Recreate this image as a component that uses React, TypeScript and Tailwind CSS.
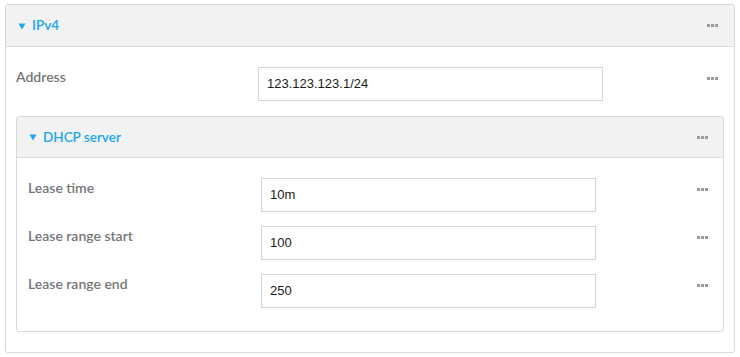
import React from 'react';

const Dots: React.FC = () => (
  <div className="flex gap-[1px]">
    <span className="w-[3px] h-[3px] bg-[#9a9a9a]" />
    <span className="w-[3px] h-[3px] bg-[#9a9a9a]" />
    <span className="w-[3px] h-[3px] bg-[#9a9a9a]" />
  </div>
);

interface FieldRowProps {
  label: string;
  value: string;
  labelWidth: string;
  inputWidth: string;
}

const FieldRow: React.FC<FieldRowProps> = ({ label, value, labelWidth, inputWidth }) => (
  <div className="flex items-start">
    <div className={`${labelWidth} pt-[1px] text-[14px] leading-[18px] font-semibold text-[#757575]`}>{label}</div>
    <div
      className={`${inputWidth} h-[34px] border border-[#d4d4d4] bg-white pl-[8px] flex items-center text-[13px] text-[#1a1a1a]`}
      style={{ fontFamily: '"Liberation Sans", Arial, sans-serif' }}
    >
      {value}
    </div>
    <div className="ml-auto pt-[10px]">
      <Dots />
    </div>
  </div>
);

// small filled caret, 7px wide like the reference
const Caret: React.FC = () => (
  <svg width="8" height="7" viewBox="0 0 8 7" className="mr-[6px] mt-[1px]">
    <path d="M0.5 0.5 L7.5 0.5 L4 6.5 Z" fill="#1aa7ee" />
  </svg>
);

const SectionHeader: React.FC<{ title: string; height: string; pr: string }> = ({ title, height, pr }) => (
  <div className={`${height} ${pr} bg-[#f2f2f2] border-b border-[#dcdcdc] flex items-center pl-[12px]`}>
    <Caret />
    <span className="text-[13.5px] font-semibold text-[#1aa7ee]">{title}</span>
    <div className="ml-auto">
      <Dots />
    </div>
  </div>
);

export default function App() {
  return (
    <div className="w-[740px] h-[357px] bg-white pt-[4px] px-[5px]" style={{ fontFamily: 'Lato, "Open Sans", sans-serif' }}>
      <div className="border border-[#d9d9d9] rounded-[3px] overflow-hidden">
        <SectionHeader title="IPv4" height="h-[42px]" pr="pr-[16px]" />

        <div className="pt-[20px] pl-[10px] pr-[10px] pb-[20px]">
          <div className="pr-[6px]">
            <FieldRow label="Address" value="123.123.123.1/24" labelWidth="w-[242px]" inputWidth="w-[345px]" />
          </div>

          <div className="mt-[15px] border border-[#d9d9d9] rounded-[3px] overflow-hidden">
            <SectionHeader title="DHCP server" height="h-[41px]" pr="pr-[15px]" />
            <div className="pt-[20px] pl-[11px] pr-[15px] pb-[23px] flex flex-col gap-[14px]">
              <FieldRow label="Lease time" value="10m" labelWidth="w-[233px]" inputWidth="w-[335px]" />
              <FieldRow label="Lease range start" value="100" labelWidth="w-[233px]" inputWidth="w-[335px]" />
              <FieldRow label="Lease range end" value="250" labelWidth="w-[233px]" inputWidth="w-[335px]" />
            </div>
          </div>
        </div>
      </div>
    </div>
  );
}
